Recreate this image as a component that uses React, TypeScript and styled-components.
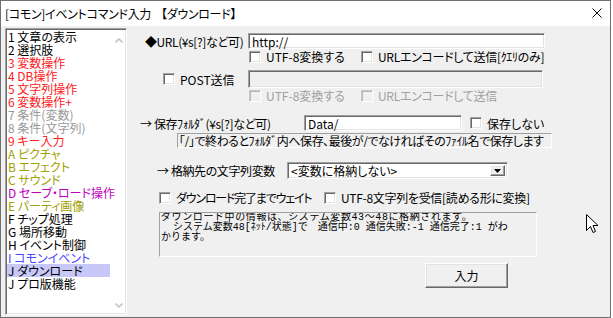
import React from 'react';
import styled, { createGlobalStyle, css } from 'styled-components';

const GlobalStyle = createGlobalStyle`
  html, body {
    margin: 0;
    padding: 0;
    background: #ffffff;
  }
  body {
    font-family: "Noto Sans CJK JP", sans-serif;
    font-size: 12px;
    color: #000000;
  }
`;

const sunken = css`
  box-sizing: border-box;
  border-style: solid;
  border-width: 1px;
  border-color: #a0a0a0 #ffffff #ffffff #a0a0a0;
  box-shadow: inset 1px 1px 0 #696969, inset -1px -1px 0 #e3e3e3;
`;

const raised = css`
  box-sizing: border-box;
  border-style: solid;
  border-width: 1px;
  border-color: #ffffff #696969 #696969 #ffffff;
  box-shadow: inset -1px -1px 0 #a0a0a0, inset 1px 1px 0 #e3e3e3;
  background: #f0f0f0;
`;

const Window = styled.div`
  position: relative;
  width: 611px;
  height: 318px;
  box-sizing: border-box;
  border: 1px solid #6f6f6f;
  display: flex;
  flex-direction: column;
  background: #f0f0f0;
  font-feature-settings: "palt";
`;

const TitleBar = styled.div`
  height: 25px;
  flex: none;
  display: flex;
  align-items: center;
  padding-left: 4px;
  background: #ffffff;
  white-space: nowrap;
  letter-spacing: -0.3px;
`;

const TitleMain = styled.span`
  margin-right: 10px;
`;

const CloseIcon = styled.svg`
  margin-left: auto;
  margin-right: 8px;
  margin-top: -2px;
`;

const Body = styled.div`
  flex: 1;
  min-height: 0;
  display: flex;
  gap: 3px;
  padding: 2px 0 2px 4px;
`;

const ListBox = styled.div`
  ${sunken};
  width: 122px;
  height: 287px;
  padding: 1px;
  background: #ffffff;
  display: flex;
`;

const ItemList = styled.div`
  flex: 1;
  min-width: 0;
`;

const ListItem = styled.div<{ $color: string; $selected?: boolean }>`
  height: 13px;
  line-height: 13px;
  padding-left: 1px;
  white-space: nowrap;
  color: ${({ $color }) => $color};
  background: ${({ $selected }) => ($selected ? '#c8c8f8' : 'transparent')};
`;

const ScrollArea = styled.div`
  width: 15px;
  display: flex;
  flex-direction: column;
  justify-content: space-between;
  align-items: flex-start;
  padding: 8px 0 5px 5px;
  box-sizing: border-box;
`;

const Panel = styled.div`
  flex: 1;
  display: flex;
  flex-direction: column;
`;

const Row = styled.div<{ $top: number; $height: number; $indent: number }>`
  display: flex;
  align-items: center;
  margin-top: ${({ $top }) => $top}px;
  height: ${({ $height }) => $height}px;
  padding-left: ${({ $indent }) => $indent}px;
  white-space: nowrap;
`;

const Label = styled.div<{ $width: number }>`
  width: ${({ $width }) => $width}px;
  flex: none;
  letter-spacing: -0.4px;
`;

const TextBox = styled.div<{ $width: number; $disabled?: boolean }>`
  ${sunken};
  width: ${({ $width }) => $width}px;
  height: 100%;
  flex: none;
  display: flex;
  align-items: center;
  padding-left: 3px;
  background: ${({ $disabled }) => ($disabled ? '#f0f0f0' : '#ffffff')};
`;

const CheckItem = styled.label<{ $width?: number; $disabled?: boolean; $spacing?: number }>`
  display: flex;
  align-items: center;
  gap: 5px;
  flex: none;
  width: ${({ $width }) => ($width ? `${$width}px` : 'auto')};
  letter-spacing: ${({ $spacing }) => $spacing ?? 0}px;
  color: ${({ $disabled }) => ($disabled ? '#a0a0a0' : '#000000')};
`;

const CheckBox = styled.span<{ $disabled?: boolean }>`
  width: 12px;
  height: 12px;
  flex: none;
  ${sunken};
  background: ${({ $disabled }) => ($disabled ? '#f0f0f0' : '#ffffff')};
  ${({ $disabled }) =>
    $disabled &&
    css`
      border-color: #c8c8c8 #ffffff #ffffff #c8c8c8;
      box-shadow: inset 1px 1px 0 #b4b4b4, inset -1px -1px 0 #ececec;
    `}
`;

const StaticNote = styled.div<{ $width: number }>`
  box-sizing: border-box;
  width: ${({ $width }) => $width}px;
  height: 100%;
  border-style: solid;
  border-width: 1px;
  border-color: #a0a0a0 #ffffff #ffffff #a0a0a0;
  display: flex;
  align-items: center;
  padding-left: 1px;
  letter-spacing: -0.45px;
  overflow: hidden;
`;

const Combo = styled.div<{ $width: number }>`
  ${sunken};
  width: ${({ $width }) => $width}px;
  height: 100%;
  display: flex;
  align-items: center;
  padding: 2px 2px 2px 3px;
  background: #ffffff;
`;

const ComboText = styled.span`
  flex: 1;
`;

const DropButton = styled.span`
  ${raised};
  width: 15px;
  height: 100%;
  display: flex;
  align-items: center;
  justify-content: center;
`;

const InfoBox = styled.div<{ $width: number }>`
  box-sizing: border-box;
  width: ${({ $width }) => $width}px;
  height: 100%;
  border-style: solid;
  border-width: 1px;
  border-color: #a0a0a0 #ffffff #ffffff #a0a0a0;
  padding: 0 0 0 1px;
  font-family: "Liberation Mono", "Noto Sans CJK JP", monospace;
  font-feature-settings: normal;
  font-size: 10px;
  line-height: 10px;
  white-space: pre;
  overflow: hidden;
`;

const InfoLine = styled.div<{ $spacing?: number }>`
  letter-spacing: ${({ $spacing }) => $spacing ?? 0}px;
`;

const PushButton = styled.button<{ $width: number }>`
  ${raised};
  width: ${({ $width }) => $width}px;
  height: 100%;
  padding: 0;
  font: inherit;
  color: #000000;
`;

const Cursor = styled.svg`
  position: absolute;
  left: 585px;
  top: 213px;
`;

type Item = { text: string; color: string; selected?: boolean };

const items: Item[] = [
  { text: '1 文章の表示', color: '#000000' },
  { text: '2 選択肢', color: '#000000' },
  { text: '3 変数操作', color: '#ff2020' },
  { text: '4 DB操作', color: '#ff2020' },
  { text: '5 文字列操作', color: '#ff2020' },
  { text: '6 変数操作+', color: '#ff2020' },
  { text: '7 条件(変数)', color: '#989898' },
  { text: '8 条件(文字列)', color: '#989898' },
  { text: '9 キー入力', color: '#ff2020' },
  { text: 'A ピクチャ', color: '#a0a000' },
  { text: 'B エフェクト', color: '#a0a000' },
  { text: 'C サウンド', color: '#a0a000' },
  { text: 'D セーブ・ロード操作', color: '#c000c0' },
  { text: 'E パーティ画像', color: '#a0a000' },
  { text: 'F チップ処理', color: '#000000' },
  { text: 'G 場所移動', color: '#000000' },
  { text: 'H イベント制御', color: '#000000' },
  { text: 'I コモンイベント', color: '#4848ff' },
  { text: 'J ダウンロード', color: '#000000', selected: true },
  { text: 'J プロ版機能', color: '#000000' },
];

const Chevron: React.FC<{ up?: boolean }> = ({ up }) => (
  <svg width="8" height="5" viewBox="0 0 8 5">
    <polyline
      points={up ? '0.5,4.5 4,1 7.5,4.5' : '0.5,0.5 4,4 7.5,0.5'}
      fill="none"
      stroke="#c4c4c4"
      strokeWidth="1.6"
    />
  </svg>
);

const Check: React.FC<{ label: string; width?: number; disabled?: boolean; spacing?: number }> = ({
  label,
  width,
  disabled,
  spacing,
}) => (
  <CheckItem $width={width} $disabled={disabled} $spacing={spacing}>
    <CheckBox $disabled={disabled} />
    {label}
  </CheckItem>
);

export default function App() {
  return (
    <>
      <GlobalStyle />
      <Window>
        <TitleBar>
          <TitleMain>[コモン]イベントコマンド入力</TitleMain>
          <span>【ダウンロード】</span>
          <CloseIcon width="10" height="10" viewBox="0 0 10 10">
            <path d="M0.5 0.5 L9.5 9.5 M9.5 0.5 L0.5 9.5" stroke="#000" strokeWidth="1" />
          </CloseIcon>
        </TitleBar>

        <Body>
          <ListBox>
            <ItemList>
              {items.map(item => (
                <ListItem key={item.text} $color={item.color} $selected={item.selected}>
                  {item.text}
                </ListItem>
              ))}
            </ItemList>
            <ScrollArea>
              <Chevron up />
              <Chevron />
            </ScrollArea>
          </ListBox>

          <Panel>
            <Row $top={5} $height={16} $indent={15}>
              <Label $width={103}>◆URL(¥s[?]など可)</Label>
              <TextBox $width={297}>http://</TextBox>
            </Row>
            <Row $top={1} $height={13} $indent={119}>
              <Check label="UTF-8変換する" width={112} />
              <Check label="URLエンコードして送信[ｸｴﾘのみ]" spacing={-0.3} />
            </Row>
            <Row $top={7} $height={18} $indent={33}>
              <Check label="POST送信" width={85} />
              <TextBox $width={295} $disabled />
            </Row>
            <Row $top={1} $height={13} $indent={119}>
              <Check label="UTF-8変換する" width={112} disabled />
              <Check label="URLエンコードして送信" disabled spacing={-0.3} />
            </Row>
            <Row $top={13} $height={16} $indent={10}>
              <Label $width={164}>→ 保存ﾌｫﾙﾀﾞ(¥s[?]など可)</Label>
              <TextBox $width={158}>Data/</TextBox>
              <Label $width={8} />
              <Check label="保存しない" />
            </Row>
            <Row $top={2} $height={15} $indent={47}>
              <StaticNote $width={375}>｢/｣で終わるとﾌｫﾙﾀﾞ内へ保存、最後が/でなければそのﾌｧｲﾙ名で保存します</StaticNote>
            </Row>
            <Row $top={14} $height={17} $indent={27}>
              <Label $width={130}>→ 格納先の文字列変数</Label>
              <Combo $width={221}>
                <ComboText>&lt;変数に格納しない&gt;</ComboText>
                <DropButton>
                  <svg width="7" height="4" viewBox="0 0 7 4">
                    <path d="M0 0 H7 L3.5 4 Z" fill="#000" />
                  </svg>
                </DropButton>
              </Combo>
            </Row>
            <Row $top={12} $height={13} $indent={29}>
              <Check label="ダウンロード完了までウェイト" width={165} spacing={-1.2} />
              <Check label="UTF-8文字列を受信[読める形に変換]" spacing={-0.3} />
            </Row>
            <Row $top={8} $height={45} $indent={29}>
              <InfoBox $width={378}>
                <InfoLine $spacing={0.6}>ダウンロード中の情報は、システム変数43～48に格納されます。</InfoLine>
                <InfoLine>{'  システム変数48[ﾈｯﾄ/状態]で　通信中:0 通信失敗:-1 通信完了:1 がわ'}</InfoLine>
                <InfoLine>かります。</InfoLine>
              </InfoBox>
            </Row>
            <Row $top={6} $height={25} $indent={295}>
              <PushButton $width={83}>入力</PushButton>
            </Row>
          </Panel>
        </Body>

        <Cursor width="13" height="20" viewBox="0 0 13 20">
          <path
            d="M0.5 0.5 L0.5 16.5 L4.5 12.5 L7 18.5 L9.5 17.5 L7 11.5 L12 11.5 Z"
            fill="#ffffff"
            stroke="#000000"
            strokeWidth="1"
            strokeLinejoin="miter"
          />
        </Cursor>
      </Window>
    </>
  );
}
